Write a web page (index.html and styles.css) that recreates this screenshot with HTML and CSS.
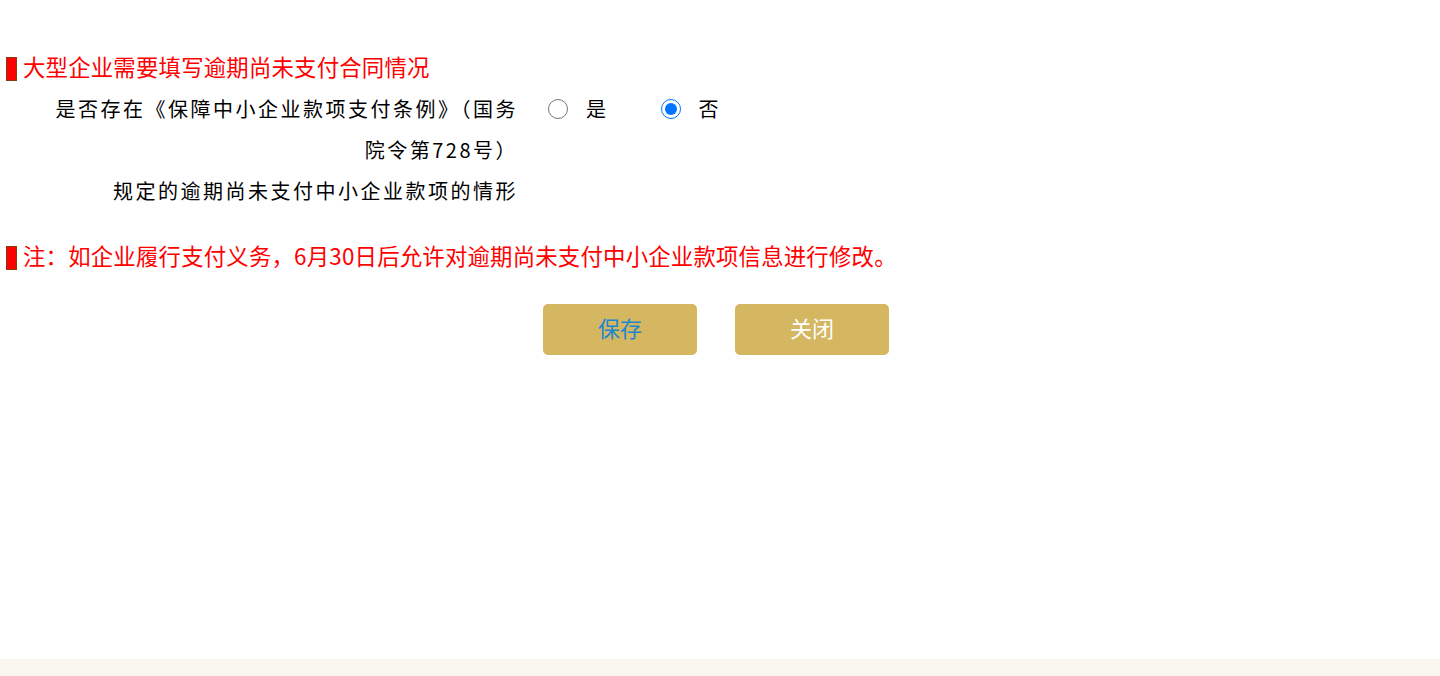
FILE: index.html
```html
<!DOCTYPE html>
<html lang="zh-CN">
<head>
  <meta charset="UTF-8">
  <title>逾期尚未支付合同情况</title>
  <link rel="stylesheet" href="styles.css">
</head>
<body>

  <div class="page">
    <main class="content">

      <div class="section-title">
        <span class="marker"></span>
        <span class="title-text">大型企业需要填写逾期尚未支付合同情况</span>
      </div>

      <div class="form-row">
        <div class="form-label">是否存在《保障中小企业款项支付条例》（国务<br>院令第728号）<br>规定的逾期尚未支付中小企业款项的情形</div>
        <div class="radio-group">
          <label class="radio-item"><input type="radio" name="overdue" value="1"><span>是</span></label>
          <label class="radio-item"><input type="radio" name="overdue" value="0" checked><span>否</span></label>
        </div>
      </div>

      <div class="section-title note">
        <span class="marker"></span>
        <span class="title-text">注：如企业履行支付义务，6月30日后允许对逾期尚未支付中小企业款项信息进行修改。</span>
      </div>

      <div class="actions">
        <button class="btn btn-save">保存</button>
        <button class="btn btn-close">关闭</button>
      </div>

    </main>
    <footer class="footer"></footer>
  </div>

</body>
</html>
```

FILE: styles.css
```css
body {
  margin: 0;
  font-family: "Noto Sans CJK SC", "Noto Sans", sans-serif;
  background: #ffffff;
  color: #000;
}

.page {
  min-height: 100vh;
  display: flex;
  flex-direction: column;
}

.content {
  flex: 1;
  padding: 53px 0 0 6px;
}

.section-title {
  display: flex;
  align-items: flex-start;
  gap: 6px;
  height: 30px;
  color: #ff0000;
}

.title-text {
  font-size: 22.4px;
  line-height: 26px;
  letter-spacing: 0.2px;
}

.marker {
  width: 9px;
  height: 22px;
  background: #ff0000;
  border: 1px solid #8b3a0f;
  margin-top: 4px;
}

.form-row {
  display: flex;
  align-items: flex-start;
  margin-top: 5px;
}

.form-label {
  width: 512px;
  text-align: right;
  font-size: 20px;
  line-height: 41px;
  letter-spacing: 2.5px;
}

.radio-group {
  display: flex;
  align-items: center;
  height: 41px;
  margin-left: 30px;
  gap: 52px;
}

.radio-item {
  display: flex;
  align-items: center;
  gap: 18px;
  font-size: 20px;
  letter-spacing: 2.5px;
}

.radio-item input {
  width: 20px;
  height: 20px;
  margin: 0;
}

.note {
  margin-top: 31px;
}

.actions {
  display: flex;
  justify-content: center;
  gap: 38px;
  margin-top: 32px;
  padding-right: 14px;
}

.btn {
  width: 154px;
  height: 51px;
  padding: 0 0 5px;
  border: none;
  border-radius: 5px;
  background: #d5b661;
  font-family: inherit;
  font-size: 22px;
  cursor: pointer;
}

.btn-save {
  color: #1a87d0;
}

.btn-close {
  color: #ffffff;
}

.footer {
  height: 17px;
  background: #f9f6ee;
}
```
